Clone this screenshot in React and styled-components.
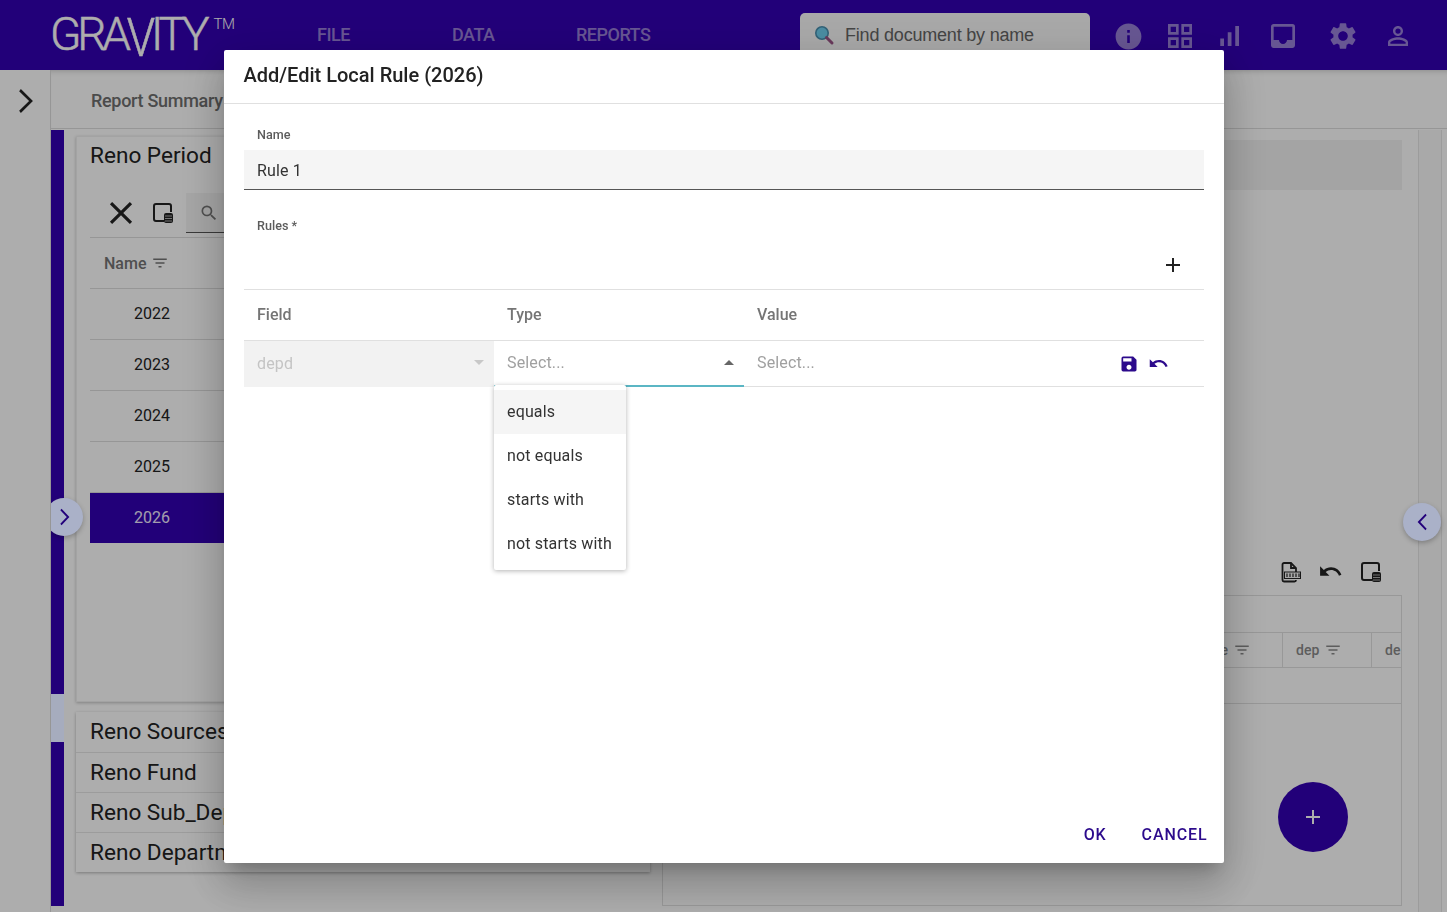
import React from "react";
import styled, { createGlobalStyle } from "styled-components";
import {
  MdInfo,
  MdOutlineGridView,
  MdSignalCellularAlt,
  MdInbox,
  MdSettings,
  MdPersonOutline,
  MdClose,
  MdSearch,
  MdFilterList,
  MdAdd,
  MdSave,
  MdUndo,
} from "react-icons/md";

const PURPLE = "#3300b3";
const DIALOG_PURPLE = "#2c0a8c";

const years = ["2022", "2023", "2024", "2025", "2026"];
const sections = ["Reno Sources", "Reno Fund", "Reno Sub_Department", "Reno Department"];
const options = ["equals", "not equals", "starts with", "not starts with"];

function Chevron({ left, w = 16, h = 24, stroke = 2.6 }) {
  const points = left ? "14,2 3,12 14,22" : "3,2 14,12 3,22";
  return (
    <svg width={w} height={h} viewBox="0 0 17 24" fill="none" preserveAspectRatio="none">
      <polyline points={points} stroke="currentColor" strokeWidth={stroke} />
    </svg>
  );
}

function TableDbIcon({ size = 24 }) {
  return (
    <svg width={size} height={size} viewBox="0 0 24 24" fill="none">
      <path d="M13 20H5a2 2 0 0 1-2-2V5a2 2 0 0 1 2-2h13a2 2 0 0 1 2 2v6" stroke="#222" strokeWidth="2" />
      <rect x="13" y="12" width="9" height="10" rx="2" fill="#222" />
      <path d="M14 15h7M14 17.5h7M14 20h7" stroke="#bbb" strokeWidth="0.9" />
    </svg>
  );
}

function CsvFileIcon({ size = 24 }) {
  return (
    <svg width={size} height={size} viewBox="0 0 24 24" fill="none">
      <path d="M18 12V8l-5-5H6a1.5 1.5 0 0 0-1.5 1.5V20A1.5 1.5 0 0 0 6 21.5h10.5A1.5 1.5 0 0 0 18 20" stroke="#222" strokeWidth="1.8" />
      <path d="M13 3v5h5" stroke="#222" strokeWidth="1.8" />
      <rect x="6.5" y="12" width="16" height="6.5" fill="#f5f5f5" stroke="#222" strokeWidth="1" />
      <path d="M9 13.5v3.5M12 13.5v3.5M15 13.5v3.5M18 13.5v3.5M21 13.5v3.5" stroke="#222" strokeWidth="1.2" />
    </svg>
  );
}

function SearchGlyph() {
  return (
    <svg width="22" height="22" viewBox="0 0 22 22" fill="none">
      <circle cx="9" cy="9" r="6.2" fill="#6fd0f0" stroke="#4a90b0" strokeWidth="1.6" />
      <path d="M13.5 13.5 19 19" stroke="#9c5588" strokeWidth="3" strokeLinecap="round" />
    </svg>
  );
}

export default function App() {
  return (
    <>
      <GlobalStyle />
      <Page>
        <Header>
          <Logo>
            GRA<LogoV>V</LogoV>ITY<LogoTm>TM</LogoTm>
          </Logo>
          <Nav>
            <NavItem $w={135}>FILE</NavItem>
            <NavItem $w={124}>DATA</NavItem>
            <NavItem $w={224}>REPORTS</NavItem>
          </Nav>
          <SearchBox>
            <SearchGlyph />
            <span>Find document by name</span>
          </SearchBox>
          <HeaderIcons>
            <HeaderIcon $w={52}><MdInfo size={31} /></HeaderIcon>
            <HeaderIcon $w={52}><MdOutlineGridView size={32} /></HeaderIcon>
            <HeaderIcon $w={46}><MdSignalCellularAlt size={30} /></HeaderIcon>
            <HeaderIcon $w={62}><MdInbox size={32} /></HeaderIcon>
            <HeaderIcon $w={58}><MdSettings size={32} /></HeaderIcon>
            <HeaderIcon $w={52}><MdPersonOutline size={30} /></HeaderIcon>
          </HeaderIcons>
        </Header>

        <Body>
          <Rail>
            <Chevron w={17} h={26} />
          </Rail>
          <Main>
            <TabBar>
              <Tab>Report Summary</Tab>
            </TabBar>
            <Content>
              <Strip>
                <StripPart $h={564} />
                <StripPart $h={48} $light />
                <StripPart $h={164} />
                <CircleButton $side="left">
                  <Chevron w={11} h={18} stroke={2.8} />
                </CircleButton>
              </Strip>

              <LeftColumn>
                <PeriodCard>
                  <CardTitle>Reno Period</CardTitle>
                  <Toolbar>
                    <ToolIcon><MdClose size={38} /></ToolIcon>
                    <ToolIcon><TableDbIcon /></ToolIcon>
                    <SearchField><MdSearch size={20} /></SearchField>
                  </Toolbar>
                  <YearHead>
                    Name <MdFilterList size={18} />
                  </YearHead>
                  {years.map((y) => (
                    <YearRow key={y} $selected={y === "2026"}>{y}</YearRow>
                  ))}
                </PeriodCard>
                <SectionList>
                  {sections.map((s) => (
                    <SectionRow key={s}>{s}</SectionRow>
                  ))}
                </SectionList>
              </LeftColumn>

              <RightPanel>
                <GrayBar />
                <PanelTools>
                  <CsvFileIcon />
                  <MdUndo size={25} />
                  <TableDbIcon />
                </PanelTools>
                <DataTable>
                  <TableTop />
                  <TableHead>
                    <HeadCell $w={100} $pad={18}>type <MdFilterList size={18} /></HeadCell>
                    <HeadCell $w={89} $pad={13}>dep <MdFilterList size={18} /></HeadCell>
                    <HeadCell $w={29} $pad={13} $last>de</HeadCell>
                  </TableHead>
                  <TableRow />
                  <Fab><MdAdd size={24} /></Fab>
                </DataTable>
              </RightPanel>

              <RightStrip>
                <CircleButton $side="right">
                  <Chevron left w={11} h={18} stroke={2.8} />
                </CircleButton>
              </RightStrip>
            </Content>
          </Main>
        </Body>

        <Overlay>
          <Dialog>
            <DialogTitle>Add/Edit Local Rule (2026)</DialogTitle>
            <DialogBody>
              <FieldLabel>Name</FieldLabel>
              <NameInput>Rule 1</NameInput>
              <RulesLabel>Rules *</RulesLabel>
              <RulesAdd>
                <MdAdd size={24} />
              </RulesAdd>
              <RuleGrid>
                <RuleHead>Field</RuleHead>
                <RuleHead>Type</RuleHead>
                <RuleHead>Value</RuleHead>
              </RuleGrid>
              <RuleGrid $row>
                <RuleCell $disabled>
                  <CellText $disabled>depd</CellText>
                  <Caret $disabled />
                </RuleCell>
                <RuleCell $focused>
                  <CellText>Select...</CellText>
                  <Caret $up />
                  <Menu>
                    {options.map((o, i) => (
                      <MenuItem key={o} $active={i === 0}>{o}</MenuItem>
                    ))}
                  </Menu>
                </RuleCell>
                <RuleCell>
                  <CellText>Select...</CellText>
                  <RowActions>
                    <MdSave size={20} />
                    <MdUndo size={21} />
                  </RowActions>
                </RuleCell>
              </RuleGrid>
            </DialogBody>
            <DialogFooter>
              <FooterButton>OK</FooterButton>
              <FooterButton>CANCEL</FooterButton>
            </DialogFooter>
          </Dialog>
        </Overlay>
      </Page>
    </>
  );
}

const GlobalStyle = createGlobalStyle`
  html, body {
    margin: 0;
    padding: 0;
    height: 100%;
    overflow: hidden;
    font-family: Roboto, "Liberation Sans", sans-serif;
    background: #fff;
  }
  * {
    box-sizing: border-box;
  }
`;

const Page = styled.div`
  width: 1447px;
  height: 912px;
  display: flex;
  flex-direction: column;
  overflow: hidden;
`;

const Header = styled.header`
  height: 70px;
  flex: none;
  background: ${PURPLE};
  display: flex;
  align-items: flex-start;
  padding-left: 50px;
`;

const Logo = styled.div`
  width: 267px;
  flex: none;
  padding-top: 6px;
  font-family: Roboto, sans-serif;
  font-weight: 300;
  font-size: 46px;
  line-height: 56px;
  letter-spacing: -4.2px;
  color: #fff;
  -webkit-text-stroke: 0.5px #fff;
  white-space: nowrap;
`;

const LogoV = styled.span`
  display: inline-block;
  transform: scaleY(1.16) translateY(3px);
`;

const LogoTm = styled.sup`
  font-size: 15px;
  letter-spacing: -0.5px;
  line-height: 0;
  vertical-align: 21px;
  margin-left: 8px;
  -webkit-text-stroke: 0;
`;

const Nav = styled.nav`
  display: flex;
  width: 483px;
  flex: none;
  padding-top: 25px;
`;

const NavItem = styled.div`
  width: ${(p) => p.$w}px;
  font-size: 18px;
  line-height: 20px;
  font-weight: 500;
  letter-spacing: -0.5px;
  color: rgba(255, 255, 255, 0.5);
`;

const SearchBox = styled.div`
  width: 290px;
  height: 60px;
  flex: none;
  margin-top: 13px;
  background: #fafafa;
  border-radius: 5px;
  display: flex;
  align-items: flex-start;
  gap: 10px;
  padding: 11px 0 0 13px;
  color: #666;
  font-family: "Liberation Sans", Arial, sans-serif;
  font-size: 18px;
  line-height: 22px;
  letter-spacing: -0.2px;
`;

const HeaderIcons = styled.div`
  display: flex;
  padding: 20px 0 0 12px;
`;

const HeaderIcon = styled.div`
  width: ${(p) => p.$w}px;
  height: 32px;
  display: flex;
  justify-content: center;
  align-items: center;
  color: rgba(255, 255, 255, 0.5);
`;

const Body = styled.div`
  flex: 1;
  display: flex;
  min-height: 0;
`;

const Rail = styled.div`
  width: 51px;
  flex: none;
  padding: 18px 0 0 17px;
  border-right: 1px solid #ddd;
  color: #222;
`;

const Main = styled.div`
  flex: 1;
  display: flex;
  flex-direction: column;
  min-width: 0;
`;

const TabBar = styled.div`
  height: 59px;
  flex: none;
  margin-bottom: 1px;
  border-bottom: 1px solid #ddd;
  box-shadow: inset 0 6px 6px -6px rgba(0, 0, 0, 0.25);
  display: flex;
  padding: 20px 0 0 40px;
`;

const Tab = styled.div`
  font-size: 18px;
  line-height: 22px;
  font-weight: 500;
  letter-spacing: -0.3px;
  color: #6f6f6f;
  white-space: nowrap;
`;

const Content = styled.div`
  flex: 1;
  display: flex;
  min-height: 0;
`;

const Strip = styled.div`
  position: relative;
  width: 13px;
  flex: none;
  display: flex;
  flex-direction: column;
  margin-right: 12px;
`;

const StripPart = styled.div`
  position: relative;
  height: ${(p) => p.$h}px;
  flex: none;
  background: ${(p) => (p.$light ? "#a6acbe" : PURPLE)};
  z-index: ${(p) => (p.$light ? 1 : "auto")};
`;

/* these two sit above the scrim, their tint is brighter than it would allow */
const CircleButton = styled.div`
  position: absolute;
  z-index: 1;
  top: ${(p) => (p.$side === "left" ? "368px" : "373px")};
  ${(p) => (p.$side === "left" ? "left: -6px;" : "left: -16px;")}
  ${(p) => (p.$side === "left" ? "clip-path: inset(-10px -10px -10px 6px);" : "")}
  width: 38px;
  height: 38px;
  border-radius: 50%;
  background: #aab1c8;
  color: #23007b;
  display: flex;
  justify-content: center;
  align-items: center;
  box-shadow: 0 2px 5px rgba(0, 0, 0, 0.25);
`;

const LeftColumn = styled.div`
  width: 574px;
  flex: none;
  padding-top: 6px;
  display: flex;
  flex-direction: column;
  gap: 10px;
`;

const PeriodCard = styled.section`
  height: 566px;
  flex: none;
  background: #fff;
  border: 1px solid #f0f0f0;
  box-shadow: 0 1px 3px rgba(0, 0, 0, 0.25);
  padding: 0 13px;
`;

const CardTitle = styled.h2`
  margin: 0;
  height: 38px;
  font-size: 22.6px;
  line-height: 38px;
  font-weight: 400;
  color: #222;
`;

const Toolbar = styled.div`
  height: 63px;
  display: flex;
  align-items: flex-start;
  padding: 18px 0 0 12px;
  border-bottom: 1px solid #ddd;
`;

const ToolIcon = styled.div`
  width: 38px;
  height: 40px;
  display: flex;
  justify-content: center;
  align-items: center;
  color: #222;
  margin-right: 4px;
`;

const SearchField = styled.div`
  flex: 1;
  height: 40px;
  background: #f5f5f5;
  border-bottom: 1px solid #555;
  color: #777;
  display: flex;
  align-items: center;
  padding-left: 13px;
`;

const YearHead = styled.div`
  height: 51px;
  display: flex;
  align-items: center;
  gap: 5px;
  padding-left: 14px;
  border-bottom: 1px solid #ddd;
  font-size: 16px;
  font-weight: 500;
  color: #757575;
`;

const YearRow = styled.div`
  height: ${(p) => (p.$selected ? "50px" : "51px")};
  display: flex;
  align-items: center;
  padding: 0 0 1px 44px;
  border-bottom: ${(p) => (p.$selected ? "none" : "1px solid #ddd")};
  font-size: 16px;
  color: ${(p) => (p.$selected ? "#f0e8ff" : "#222")};
  background: ${(p) => (p.$selected ? PURPLE : "transparent")};
`;

const SectionList = styled.div`
  background: #fff;
  box-shadow: 0 1px 3px rgba(0, 0, 0, 0.3);
`;

const SectionRow = styled.div`
  height: 40px;
  padding-left: 14px;
  font-size: 22.6px;
  line-height: 40px;
  color: #222;
  border-top: 1px solid #e6e6e6;
  white-space: nowrap;

  &:first-child {
    border-top: none;
  }
`;

const RightPanel = styled.div`
  width: 740px;
  flex: none;
  margin: 0 0 6px 12px;
  display: flex;
  flex-direction: column;
  border-left: 1px solid #e0e0e0;
  padding-top: 10px;
`;

const GrayBar = styled.div`
  height: 50px;
  flex: none;
  background: #f2f2f2;
`;

const PanelTools = styled.div`
  flex: 1;
  display: flex;
  justify-content: flex-end;
  align-items: flex-end;
  gap: 16px;
  padding: 0 19px 11px 0;
  color: #222;
`;

const DataTable = styled.div`
  position: relative;
  height: 311px;
  flex: none;
  border: 1px solid #e0e0e0;
  border-left: none;
`;

const TableTop = styled.div`
  height: 36px;
`;

const TableHead = styled.div`
  height: 36px;
  display: flex;
  justify-content: flex-end;
  border-top: 1px solid #e0e0e0;
  border-bottom: 1px solid #e0e0e0;
`;

const HeadCell = styled.div`
  width: ${(p) => p.$w}px;
  flex: none;
  display: flex;
  align-items: center;
  gap: 5px;
  padding-left: ${(p) => p.$pad}px;
  border-right: ${(p) => (p.$last ? "none" : "1px solid #e0e0e0")};
  font-size: 14px;
  font-weight: 500;
  color: #8a8a8a;
  overflow: hidden;
`;

const TableRow = styled.div`
  height: 36px;
  border-bottom: 1px solid #e0e0e0;
`;

const Fab = styled.div`
  position: absolute;
  top: 186px;
  right: 53px;
  width: 70px;
  height: 70px;
  border-radius: 50%;
  background: ${PURPLE};
  color: #fff;
  display: flex;
  justify-content: center;
  align-items: center;
`;

const RightStrip = styled.div`
  position: relative;
  width: 24px;
  flex: none;
  margin: 0 0 0 16px;
  background: #fafafa;
  border-left: 1px solid #e6e6e6;
  border-right: 1px solid #e6e6e6;
`;

const Overlay = styled.div`
  position: fixed;
  inset: 0;
  display: flex;
  justify-content: center;
  align-items: center;
  background: rgba(0, 0, 0, 0.32);
`;

const Dialog = styled.div`
  width: 1000px;
  height: 813px;
  display: flex;
  flex-direction: column;
  background: #fff;
  border-radius: 2px;
  box-shadow: 0 11px 15px -7px rgba(0, 0, 0, 0.2), 0 24px 38px 3px rgba(0, 0, 0, 0.14),
    0 9px 46px 8px rgba(0, 0, 0, 0.12);
`;

const DialogTitle = styled.div`
  height: 54px;
  flex: none;
  padding-left: 20px;
  font-size: 20px;
  line-height: 51px;
  font-weight: 500;
  color: #222;
  border-bottom: 1px solid #e0e0e0;
`;

const DialogBody = styled.div`
  flex: 1;
  padding: 24px 20px 0;
  min-height: 0;
`;

const FieldLabel = styled.div`
  padding-left: 13.5px;
  font-size: 12.6px;
  line-height: 14px;
  font-weight: 500;
  color: #5c5c5c;
`;

const NameInput = styled.div`
  height: 40px;
  margin-top: 8px;
  padding-left: 13.5px;
  background: #f5f5f5;
  border-bottom: 1px solid #555;
  font-size: 16px;
  line-height: 41px;
  letter-spacing: 0.15px;
  color: #333;
`;

const RulesLabel = styled(FieldLabel)`
  margin-top: 29px;
`;

const RulesAdd = styled.div`
  height: 57px;
  display: flex;
  justify-content: flex-end;
  align-items: center;
  padding: 8px 19px 0 0;
  border-bottom: 1px solid #e0e0e0;
  color: #222;
`;

const RuleGrid = styled.div`
  display: grid;
  grid-template-columns: 250px 250px 1fr;
  height: ${(p) => (p.$row ? "46px" : "51px")};
  border-bottom: 1px solid #e0e0e0;
`;

const RuleHead = styled.div`
  padding-left: 13.5px;
  font-size: 16px;
  line-height: 49px;
  font-weight: 500;
  color: #757575;
`;

const RuleCell = styled.div`
  position: relative;
  display: flex;
  align-items: center;
  height: 46px;
  padding-left: 13.5px;
  background: ${(p) => (p.$disabled ? "#f2f2f2" : "transparent")};
  border-bottom: 2px solid ${(p) => (p.$focused ? "#5bb6c4" : "transparent")};
`;

const CellText = styled.span`
  flex: 1;
  font-size: 16px;
  letter-spacing: 0.15px;
  padding-top: ${(p) => (p.$disabled ? "2px" : "0")};
  color: ${(p) => (p.$disabled ? "#c4c4c4" : "#a0a0a0")};
`;

const Caret = styled.i`
  width: 0;
  height: 0;
  margin-right: 10px;
  border-left: 5px solid transparent;
  border-right: 5px solid transparent;
  ${(p) =>
    p.$up
      ? "border-bottom: 5px solid #666;"
      : `border-top: 5px solid ${p.$disabled ? "#c8c8c8" : "#666"};`}
`;

const Menu = styled.div`
  position: absolute;
  top: 44px;
  left: 0;
  width: 132px;
  padding: 5px 0 4px;
  background: #fff;
  border-radius: 2px;
  box-shadow: 0 1px 5px rgba(0, 0, 0, 0.3);
  z-index: 2;
`;

const MenuItem = styled.div`
  height: 44px;
  padding-left: 13.5px;
  font-size: 16px;
  line-height: 44px;
  letter-spacing: 0.15px;
  color: #333;
  white-space: nowrap;
  background: ${(p) => (p.$active ? "#f5f5f5" : "transparent")};
`;

const RowActions = styled.div`
  display: flex;
  align-items: center;
  gap: 9px;
  margin: 2px 35px 0 0;
  color: ${DIALOG_PURPLE};
`;

const DialogFooter = styled.div`
  height: 58px;
  flex: none;
  display: flex;
  justify-content: flex-end;
  align-items: flex-start;
  gap: 35px;
  padding: 19px 16px 0 0;
`;

const FooterButton = styled.div`
  font-size: 16px;
  line-height: 22px;
  font-weight: 500;
  letter-spacing: 0.9px;
  color: ${DIALOG_PURPLE};
`;
